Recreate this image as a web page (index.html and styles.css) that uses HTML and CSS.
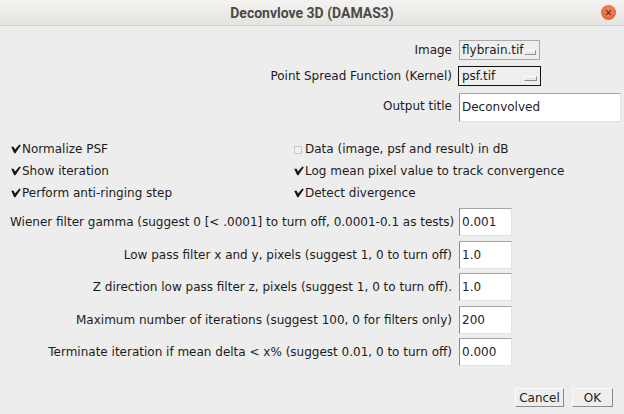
FILE: index.html
```html
<!DOCTYPE html>
<html>
<head>
<meta charset="utf-8">
<link rel="stylesheet" href="styles.css">
</head>
<body>
<div class="window">
  <header class="titlebar">
    <span class="title">Deconvlove 3D (DAMAS3)</span>
    <span class="close"><svg width="14" height="14" viewBox="0 0 14 14"><path d="M4.6 4.6 L9.4 9.4 M9.4 4.6 L4.6 9.4" stroke="#6b2a14" stroke-width="1.2" stroke-linecap="round"/></svg></span>
  </header>
  <main class="dialog">
    <div class="form top">
      <label class="lbl">Image</label>
      <div class="choice"><span class="choice-text">flybrain.tif</span><span class="choice-btn"></span></div>
      <label class="lbl">Point Spread Function (Kernel)</label>
      <div class="choice focused"><span class="choice-text">psf.tif</span><span class="choice-btn"></span></div>
      <label class="lbl">Output title</label>
      <div class="field wide">Deconvolved</div>
    </div>
    <div class="checks">
      <div class="check"><svg class="tick" width="10" height="10" viewBox="0 0 10 10"><path d="M0.2 2.8 L2.6 2.8 L4 5.6 L8.4 0.4 L9.8 1.2 L4.4 9.2 L3.2 9.2 Z" fill="#151515"/></svg>Normalize PSF</div>
      <div class="check"><svg class="tick" width="10" height="10" viewBox="0 0 10 10"><rect x="0.5" y="2.5" width="7" height="7" fill="#f2f2f2" stroke="#c8c8c8"/></svg>Data (image, psf and result) in dB</div>
      <div class="check"><svg class="tick" width="10" height="10" viewBox="0 0 10 10"><path d="M0.2 2.8 L2.6 2.8 L4 5.6 L8.4 0.4 L9.8 1.2 L4.4 9.2 L3.2 9.2 Z" fill="#151515"/></svg>Show iteration</div>
      <div class="check"><svg class="tick" width="10" height="10" viewBox="0 0 10 10"><path d="M0.2 2.8 L2.6 2.8 L4 5.6 L8.4 0.4 L9.8 1.2 L4.4 9.2 L3.2 9.2 Z" fill="#151515"/></svg>Log mean pixel value to track convergence</div>
      <div class="check"><svg class="tick" width="10" height="10" viewBox="0 0 10 10"><path d="M0.2 2.8 L2.6 2.8 L4 5.6 L8.4 0.4 L9.8 1.2 L4.4 9.2 L3.2 9.2 Z" fill="#151515"/></svg>Perform anti-ringing step</div>
      <div class="check"><svg class="tick" width="10" height="10" viewBox="0 0 10 10"><path d="M0.2 2.8 L2.6 2.8 L4 5.6 L8.4 0.4 L9.8 1.2 L4.4 9.2 L3.2 9.2 Z" fill="#151515"/></svg>Detect divergence</div>
    </div>
    <div class="form nums">
      <label class="lbl">Wiener filter gamma (suggest 0 [&lt; .0001] to turn off, 0.0001-0.1 as tests)</label>
      <div class="field num">0.001</div>
      <label class="lbl">Low pass filter x and y, pixels (suggest 1, 0 to turn off)</label>
      <div class="field num">1.0</div>
      <label class="lbl">Z direction low pass filter z, pixels (suggest 1, 0 to turn off).</label>
      <div class="field num">1.0</div>
      <label class="lbl">Maximum number of iterations (suggest 100, 0 for filters only)</label>
      <div class="field num">200</div>
      <label class="lbl">Terminate iteration if mean delta &lt; x% (suggest 0.01, 0 to turn off)</label>
      <div class="field num">0.000</div>
    </div>
    <div class="buttons">
      <button class="btn cancel">Cancel</button>
      <button class="btn ok">OK</button>
    </div>
  </main>
</div>
</body>
</html>
```
FILE: styles.css
```css
html, body {
  margin: 0;
  padding: 0;
}
body {
  width: 624px;
  height: 414px;
  overflow: hidden;
  background: #ededed;
  font-family: "DejaVu Sans", sans-serif;
  font-size: 12px;
  color: #1c1c1c;
}
.window {
  display: flex;
  flex-direction: column;
  height: 414px;
}
.titlebar {
  height: 26px;
  flex: none;
  display: flex;
  align-items: center;
  justify-content: center;
  position: relative;
  background: linear-gradient(#f4f3f1, #e6e4e0);
  border-bottom: 1px solid #d6d4cf;
  box-sizing: border-box;
}
.title {
  font-family: Roboto, "DejaVu Sans", sans-serif;
  font-weight: bold;
  font-size: 14px;
  color: #4a4a48;
}
.close {
  position: absolute;
  right: 8px;
  top: 5px;
  width: 15px;
  height: 15px;
  border-radius: 50%;
  background: radial-gradient(circle at 50% 40%, #f48c60, #e0562a);
  display: flex;
  align-items: center;
  justify-content: center;
}
.close svg { width: 13px; height: 13px; }
.dialog {
  flex: 1;
  display: flex;
  flex-direction: column;
}
.form {
  display: grid;
  grid-template-columns: 442px auto;
  column-gap: 7px;
  padding-left: 10px;
  align-items: center;
}
.top {
  margin-top: 14px;
  grid-template-rows: 20px 20px 28px;
  row-gap: 6px;
}
.top .field.wide { margin-top: 2px; }
.lbl {
  text-align: right;
  white-space: nowrap;
}
.choice {
  width: 81px;
  height: 20px;
  box-sizing: border-box;
  border: 1px solid #a9a9a9;
  background: #eeeeee;
  display: flex;
  align-items: center;
  justify-content: space-between;
  padding: 0 3px 0 2px;
}
.choice.focused {
  border-color: #111;
  margin-left: -1px;
  width: 83px;
  padding-left: 3px;
}
.choice-btn {
  width: 11px;
  height: 3px;
  border-top: 1px solid #fdfdfd;
  border-left: 1px solid #fdfdfd;
  border-right: 1px solid #8e8e8e;
  border-bottom: 1px solid #8e8e8e;
  background: #eaeaea;
  margin-top: 4px;
}
.field {
  box-sizing: border-box;
  height: 28px;
  background: #fff;
  border-top: 1px solid #a6a6a6;
  border-left: 1px solid #8a8a8a;
  border-right: 1px solid #e2e2e2;
  border-bottom: 1px solid #e2e2e2;
  display: flex;
  align-items: center;
  padding-left: 2px;
  color: #222;
}
.field.wide { width: 162px; height: 29px; }
.field.num { width: 53px; }
.checks {
  margin-top: 18px;
  display: grid;
  grid-template-columns: 283px auto;
  grid-auto-rows: 22px;
  padding-left: 11px;
}
.check {
  display: flex;
  align-items: center;
  white-space: nowrap;
}
.tick {
  flex: none;
  margin-right: 1px;
  margin-top: 0;
}
.nums {
  margin-top: 4px;
  row-gap: 4.5px;
  grid-auto-rows: 28px;
}
.buttons {
  margin-top: 22px;
  display: flex;
  justify-content: flex-end;
  gap: 8px;
  padding-right: 11px;
}
.btn {
  font-family: "DejaVu Sans", sans-serif;
  font-size: 12px;
  color: #1c1c1c;
  height: 19px;
  padding: 0;
  background: #eeeeee;
  border-top: 1px solid #fafafa;
  border-left: 1px solid #fafafa;
  border-right: 1px solid #8a8a8a;
  border-bottom: 1px solid #8a8a8a;
  border-radius: 0;
}
.cancel { width: 49px; }
.ok { width: 41px; }
```
